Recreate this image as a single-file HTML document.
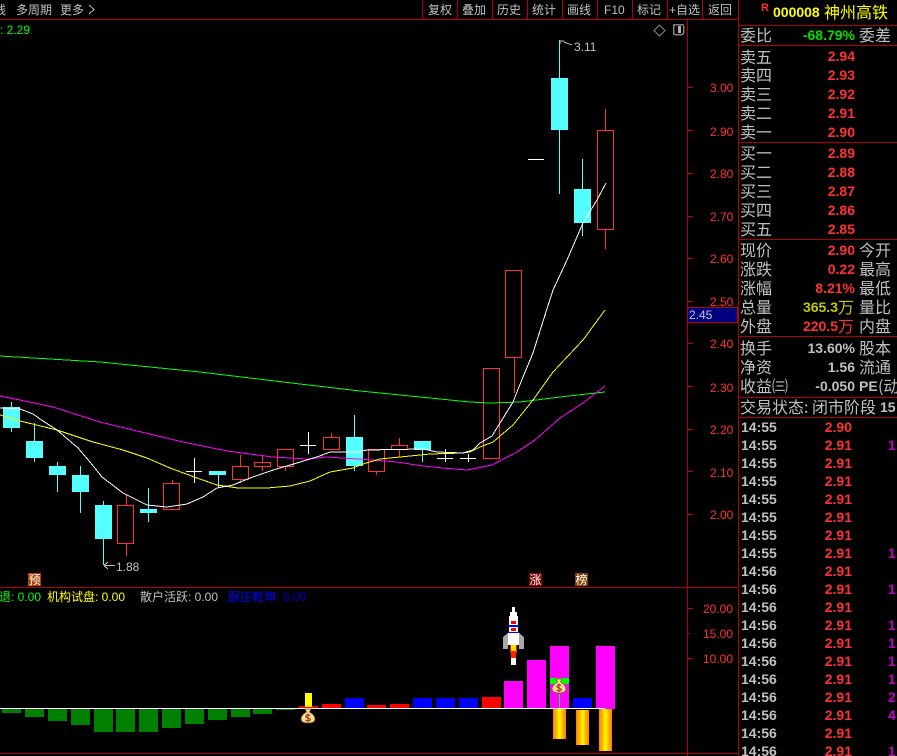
<!DOCTYPE html>
<html>
<head>
<meta charset="utf-8">
<style>
html,body{margin:0;padding:0;background:#000;width:897px;height:756px;overflow:hidden}
svg{display:block;position:absolute;left:0;top:0}
text{font-family:"Liberation Sans","WenQuanYi Zen Hei","Noto Sans CJK SC",sans-serif;white-space:pre}
.c12{font-size:12px;font-family:"WenQuanYi Zen Hei","Noto Sans CJK SC",sans-serif;fill:#c0c0c0}
.c16{font-size:16px;font-family:"WenQuanYi Zen Hei","Noto Sans CJK SC",sans-serif;fill:#c0c0c0}
.n{font-size:14px;font-weight:bold;fill:#ff3232;text-anchor:end}
.g{font-size:14px;font-weight:bold;fill:#c0c0c0}
.a{font-size:12px;fill:#ff3232}
.p{font-size:14px;font-weight:bold;fill:#c000c0}
</style>
</head>
<body>
<svg width="897" height="756" viewBox="0 0 897 756" xmlns="http://www.w3.org/2000/svg" shape-rendering="crispEdges">
<defs>
<linearGradient id="o" x1="0" x2="1" y1="0" y2="0">
<stop offset="0" stop-color="#ff8000"/><stop offset=".25" stop-color="#ffb000"/><stop offset=".5" stop-color="#ffff00"/><stop offset=".75" stop-color="#ffb000"/><stop offset="1" stop-color="#ff8000"/>
</linearGradient>
<g id="bag" shape-rendering="auto">
<path d="M-3-7H3L1.500-4C5-2 7 0 7 3C7 6 4 7 0 7C-4 7-7 6-7 3C-7 0-5-2-1.500-4Z" fill="#f8dc88" stroke="#7a4a20" stroke-width=".7"/>
<path d="M2.200-.5C1-1.500-2-1.500-2.200.3C-2.200 2.500 2.400 1.500 2.400 3.600C2.200 5.300-1 5.300-2.500 4M0-2.500V6" fill="none" stroke="#9a3030" stroke-width="1.100"/>
</g>
</defs>

<!-- frame lines -->
<path d="M0 19.500H738M422.500 0V19M457.500 0V19M492.500 0V19M527.500 0V19M562.500 0V19M597.500 0V19M632.500 0V19M667.500 0V19M702.500 0V19M738.500 0V756M687.500 19V756M0 587.500H738M0 753.500H738M738 25.500H897M738 45.500H897M738 142.500H897M738 239.500H897M738 336.500H897M738 397.500H897M738 417.500H897" stroke="#b00000" fill="none"/>

<!-- toolbar -->
<text class="c12" x="-6" y="14">线</text>
<text class="c12" x="16" y="14">多周期</text>
<text class="c12" x="60" y="14">更多</text>
<path d="M89 5L94 9.500L89 14" fill="none" stroke="#c0c0c0"/>
<text class="c12" x="428" y="14">复权</text>
<text class="c12" x="462" y="14">叠加</text>
<text class="c12" x="497" y="14">历史</text>
<text class="c12" x="532" y="14">统计</text>
<text class="c12" x="567" y="14">画线</text>
<text x="604" y="14" style="font-size:12px;fill:#c0c0c0">F10</text>
<text class="c12" x="637" y="14">标记</text>
<text x="669" y="14" style="font-size:12px;fill:#c0c0c0">+</text>
<text class="c12" x="676" y="14">自选</text>
<text class="c12" x="708" y="14">返回</text>

<!-- top icons -->
<text x="0" y="34" style="font-size:12px;fill:#00ff00">: 2.29</text>
<path d="M659.500 25L665 30.500L659.500 36L654 30.500Z" fill="none" stroke="#808080"/>
<rect x="673.500" y="24.500" width="10" height="10" rx="1.500" fill="#000" stroke="#808080" stroke-width="1.500"/>
<rect x="678" y="26" width="3" height="7" fill="#b0b0b0"/>

<!-- axis -->
<path d="M687 87.500H693M687 130.500H693M687 173.500H693M687 216.500H693M687 258.500H693M687 301.500H693M687 343.500H693M687 386.500H693M687 429.500H693M687 471.500H693M687 514.500H693M687 608.500H693M687 633.500H690M687 658.500H693" stroke="#c00000"/>
<text class="a" x="710" y="92">3.00</text>
<text class="a" x="710" y="136">2.90</text>
<text class="a" x="710" y="178">2.80</text>
<text class="a" x="710" y="221">2.70</text>
<text class="a" x="710" y="263">2.60</text>
<text class="a" x="710" y="306">2.50</text>
<text class="a" x="710" y="348">2.40</text>
<text class="a" x="710" y="392">2.30</text>
<text class="a" x="710" y="434">2.20</text>
<text class="a" x="710" y="477">2.10</text>
<text class="a" x="710" y="519">2.00</text>
<rect x="687.500" y="307.500" width="50" height="15" fill="#000080" stroke="#c00000"/>
<text x="689" y="319" style="font-size:12px;fill:#c8c8c8">2.45</text>
<text class="a" x="703" y="613">20.00</text>
<text class="a" x="703" y="638">15.00</text>
<text class="a" x="703" y="663">10.00</text>

<!-- candle wicks -->
<path d="M11.500 402V432M34.500 423V462M57.500 462V492M80.500 466V513M103.500 501V565M148.500 488V522M218.500 475V488M354.500 415V471M422.500 449V462M559.500 40V194M582.500 159V236" stroke="#54ffff" fill="none"/>
<path d="M126.500 494V505M126.500 544V556M172.500 480V483M240.500 455V466M240.500 480V483M262.500 455V462M262.500 467V471M285.500 467V471M331.500 433V437M376.500 472V475M399.500 438V445M399.500 449V457M514.500 357V393M605.500 109V130M605.500 229V249" stroke="#ff3232" fill="none"/>
<!-- cyan bodies -->
<g fill="#54ffff">
<rect x="3" y="407" width="17" height="21"/>
<rect x="26" y="441" width="17" height="17"/>
<rect x="49" y="466" width="17" height="9"/>
<rect x="72" y="475" width="17" height="17"/>
<rect x="95" y="505" width="17" height="34"/>
<rect x="140" y="509" width="17" height="4"/>
<rect x="209" y="471" width="17" height="4"/>
<rect x="346" y="437" width="17" height="29"/>
<rect x="414" y="441" width="17" height="9"/>
<rect x="551" y="78" width="17" height="52"/>
<rect x="574" y="189" width="17" height="34"/>
</g>
<!-- red bodies -->
<g fill="none" stroke="#ff3232">
<rect x="117.500" y="505.500" width="16" height="38"/>
<rect x="163.500" y="483.500" width="16" height="26"/>
<rect x="232.500" y="466.500" width="16" height="13"/>
<rect x="254.500" y="462.500" width="16" height="4"/>
<rect x="277.500" y="449.500" width="16" height="17"/>
<rect x="323.500" y="437.500" width="16" height="12"/>
<rect x="368.500" y="449.500" width="16" height="22"/>
<rect x="391.500" y="445.500" width="16" height="4"/>
<rect x="483.500" y="368.500" width="16" height="90"/>
<rect x="505.500" y="270.500" width="16" height="87"/>
<rect x="597.500" y="130.500" width="16" height="99"/>
</g>
<!-- white crosses -->
<path d="M186 471.500H202M194.500 458V483M300 445.500H316M308.500 432V454M437 458.500H453M445.500 449V462M460 458.500H476M468.500 454V462M528 159.500H544" stroke="#fff" fill="none"/>

<!-- moving averages -->
<polyline fill="none" stroke="#00ff00" points="0,356 100,362 200,372 300,384 360,391 420,397 470,402 490,403 520,402 560,397 605,392"/>
<polyline fill="none" stroke="#ff00ff" points="0,396 20,400 53,407 100,422 133,430 183,442 227,451 250,454 273,457 307,459 327,457 357,459 373,460 397,462 423,466 443,468 467,470 492,465 517,452 535,440 560,418 583,403 605,386"/>
<polyline fill="none" stroke="#ffff00" points="0,415 20,421 57,430 93,442 123,450 147,458 170,468 197,478 217,485 238,488 267,488 290,486 310,481 330,472 353,468 363,464 380,459 410,456 430,454 463,453 470,452 480,447 493,442 513,425 533,400 553,372 583,340 605,310"/>
<polyline fill="none" stroke="#ffffff" points="0,408 20,409 33,414 43,421 57,430 78,448 90,462 102,477 123,493 147,505 167,507 187,504 203,497 217,488 233,485 250,478 273,470 297,463 317,457 330,452 357,452 367,450 423,449 437,452 463,453 473,450 480,443 492,436 500,423 513,402 523,377 533,353 545,315 553,290 560,275 567,260 583,223 597,200 606,183"/>

<!-- hi/lo labels -->
<path d="M560 41V44M560 41H564M564 42L572 45" stroke="#c0c0c0" fill="none"/>
<text x="574" y="51" style="font-size:12px;fill:#c0c0c0">3.11</text>
<path d="M104 565.500H115M104 565.500L108 562M104 565.500L108 569" stroke="#c0c0c0" fill="none"/>
<text x="116" y="571" style="font-size:12px;fill:#c0c0c0">1.88</text>

<!-- tags -->
<rect x="28" y="573" width="13" height="13" fill="#b04000"/>
<text x="28.500" y="584" style="font-size:12px;fill:#fff;font-family:'WenQuanYi Zen Hei','Noto Sans CJK SC',sans-serif">预</text>
<rect x="529" y="573" width="13" height="13" fill="#800000"/>
<text x="529.500" y="584" style="font-size:12px;fill:#fff;font-family:'WenQuanYi Zen Hei','Noto Sans CJK SC',sans-serif">涨</text>
<rect x="575" y="573" width="13" height="13" fill="#804000"/>
<text x="575.500" y="584" style="font-size:12px;fill:#fff;font-family:'WenQuanYi Zen Hei','Noto Sans CJK SC',sans-serif">榜</text>

<!-- legend -->
<text x="-1" y="601" style="font-size:12px;fill:#00ff00;font-family:'WenQuanYi Zen Hei','Noto Sans CJK SC',sans-serif">退</text>
<text x="11" y="601" style="font-size:12px;fill:#00ff00">: 0.00</text>
<text x="47" y="601" style="font-size:12px;fill:#ffff00;font-family:'WenQuanYi Zen Hei','Noto Sans CJK SC',sans-serif">机构试盘</text>
<text x="95" y="601" style="font-size:12px;fill:#ffff00">: 0.00</text>
<text x="140" y="601" style="font-size:12px;fill:#c0c0c0;font-family:'WenQuanYi Zen Hei','Noto Sans CJK SC',sans-serif">散户活跃</text>
<text x="188" y="601" style="font-size:12px;fill:#c0c0c0">: 0.00</text>
<text x="228" y="601" style="font-size:12px;fill:#0000ff;font-family:'WenQuanYi Zen Hei','Noto Sans CJK SC',sans-serif">跟庄乾坤</text>
<text x="276" y="601" style="font-size:12px;fill:#0000c8">: 0.00</text>

<!-- lower bars -->
<g fill="#008000">
<rect x="2" y="709" width="19" height="4"/>
<rect x="25" y="709" width="19" height="8"/>
<rect x="48" y="709" width="19" height="12"/>
<rect x="71" y="709" width="19" height="16"/>
<rect x="94" y="709" width="19" height="23"/>
<rect x="116" y="709" width="19" height="23"/>
<rect x="139" y="709" width="19" height="23"/>
<rect x="162" y="709" width="19" height="19"/>
<rect x="185" y="709" width="19" height="15"/>
<rect x="208" y="709" width="19" height="11"/>
<rect x="231" y="709" width="19" height="8"/>
<rect x="253" y="709" width="19" height="5"/>
<rect x="276" y="709" width="19" height="1"/>
</g>
<g fill="#ff0000">
<rect x="299" y="706" width="19" height="3"/>
<rect x="322" y="704" width="19" height="5"/>
<rect x="367" y="705" width="19" height="4"/>
<rect x="390" y="704" width="19" height="5"/>
<rect x="482" y="697" width="19" height="12"/>
</g>
<rect x="305" y="693" width="7" height="14" fill="#ffff00"/>
<g fill="#0000ff">
<rect x="345" y="698" width="19" height="11"/>
<rect x="413" y="698" width="19" height="11"/>
<rect x="436" y="698" width="19" height="11"/>
<rect x="459" y="698" width="19" height="11"/>
<rect x="573" y="698" width="19" height="11"/>
</g>
<g fill="#ff00ff">
<rect x="504" y="681" width="19" height="28"/>
<rect x="527" y="660" width="19" height="49"/>
<rect x="550" y="646" width="19" height="63"/>
<rect x="596" y="646" width="19" height="63"/>
</g>
<rect x="553" y="709" width="13" height="30" fill="url(#o)"/>
<rect x="576" y="710" width="13" height="35" fill="url(#o)"/>
<rect x="599" y="709" width="13" height="42" fill="url(#o)"/>
<rect x="550" y="678" width="19" height="6" fill="#00ff00"/>
<rect x="559" y="694" width="1" height="14" fill="#00ff00"/>
<path d="M0 708.500H605" stroke="#fff"/>
<use href="#bag" x="559" y="686"/>
<use href="#bag" x="308" y="716"/>

<!-- rocket -->
<g>
<rect x="512" y="607" width="3" height="5" fill="#fff"/>
<rect x="510" y="612" width="7" height="4" fill="#fff"/>
<rect x="509" y="616" width="9" height="29" fill="#fff"/>
<path d="M503 649V637L508 633H519L524 637V649H519V645H508V649Z" fill="#a8a8a8"/>
<rect x="508" y="633" width="11" height="12" fill="#fff"/>
<rect x="511" y="621" width="5" height="3" fill="#ff0000"/>
<rect x="511" y="628" width="5" height="3" fill="#ff0000"/>
<rect x="508" y="625" width="11" height="2" fill="#0000ff"/>
<rect x="508" y="632" width="11" height="1" fill="#0000ff"/>
<rect x="510" y="645" width="7" height="8" fill="#ff2000"/>
<rect x="511" y="645" width="5" height="6" fill="#ffe000"/>
<rect x="511" y="653" width="5" height="5" fill="#ff2000"/>
<rect x="511" y="658" width="5" height="7" fill="#fff"/>
</g>

<!-- right panel header -->
<text x="761" y="11" style="font-size:11px;font-weight:bold;fill:#ff3232">R</text>
<text x="773" y="17" style="font-size:14px;font-weight:bold;fill:#ffff00">000008</text>
<text x="824" y="18" style="font-size:16px;fill:#ffff00;font-family:'WenQuanYi Zen Hei','Noto Sans CJK SC',sans-serif">神州高铁</text>

<text class="c16" x="740" y="41">委比</text>
<text class="n" x="855" y="40" style="fill:#00e000">-68.79%</text>
<text class="c16" x="859" y="41">委差</text>

<text class="c16" x="740" y="63">卖五</text><text class="n" x="855" y="61">2.94</text>
<text class="c16" x="740" y="81">卖四</text><text class="n" x="855" y="80">2.93</text>
<text class="c16" x="740" y="100">卖三</text><text class="n" x="855" y="99">2.92</text>
<text class="c16" x="740" y="119">卖二</text><text class="n" x="855" y="118">2.91</text>
<text class="c16" x="740" y="138">卖一</text><text class="n" x="855" y="137">2.90</text>
<text class="c16" x="740" y="159">买一</text><text class="n" x="855" y="158">2.89</text>
<text class="c16" x="740" y="178">买二</text><text class="n" x="855" y="177">2.88</text>
<text class="c16" x="740" y="197">买三</text><text class="n" x="855" y="196">2.87</text>
<text class="c16" x="740" y="216">买四</text><text class="n" x="855" y="215">2.86</text>
<text class="c16" x="740" y="235">买五</text><text class="n" x="855" y="234">2.85</text>

<text class="c16" x="740" y="256">现价</text><text class="n" x="855" y="255">2.90</text><text class="c16" x="859" y="256">今开</text>
<text class="c16" x="740" y="275">涨跌</text><text class="n" x="855" y="274">0.22</text><text class="c16" x="859" y="275">最高</text>
<text class="c16" x="740" y="294">涨幅</text><text class="n" x="855" y="293">8.21%</text><text class="c16" x="859" y="294">最低</text>
<text class="c16" x="740" y="313">总量</text><text class="n" x="838" y="312" style="fill:#c8c800">365.3</text><text class="c16" x="838" y="313" style="fill:#c8c800">万</text><text class="c16" x="859" y="313">量比</text>
<text class="c16" x="740" y="332">外盘</text><text class="n" x="838" y="331">220.5</text><text class="c16" x="838" y="332" style="fill:#ff3232">万</text><text class="c16" x="859" y="332">内盘</text>

<text class="c16" x="740" y="354">换手</text><text class="n" x="855" y="353" style="fill:#c0c0c0">13.60%</text><text class="c16" x="859" y="354">股本</text>
<text class="c16" x="740" y="373">净资</text><text class="n" x="855" y="372" style="fill:#c0c0c0">1.56</text><text class="c16" x="859" y="373">流通</text>
<text class="c16" x="740" y="392">收益㈢</text><text class="n" x="855" y="391" style="fill:#c0c0c0">-0.050</text><text x="859" y="391" style="font-size:14px;font-weight:bold;fill:#c0c0c0">PE</text><text class="c16" x="878" y="392">(动</text>

<text class="c16" x="740" y="413">交易状态:</text><text class="c16" x="812" y="413">闭市阶段</text><text class="g" x="880" y="412">15</text>

<!-- ticks -->
<g class="ticks">
<text class="g" x="741" y="432">14:55</text><text class="n" x="852" y="432">2.90</text>
<text class="g" x="741" y="450">14:55</text><text class="n" x="852" y="450">2.91</text><text class="p" x="888" y="450">1</text>
<text class="g" x="741" y="468">14:55</text><text class="n" x="852" y="468">2.91</text>
<text class="g" x="741" y="486">14:55</text><text class="n" x="852" y="486">2.91</text>
<text class="g" x="741" y="504">14:55</text><text class="n" x="852" y="504">2.91</text>
<text class="g" x="741" y="522">14:55</text><text class="n" x="852" y="522">2.91</text>
<text class="g" x="741" y="540">14:55</text><text class="n" x="852" y="540">2.91</text>
<text class="g" x="741" y="558">14:55</text><text class="n" x="852" y="558">2.91</text><text class="p" x="888" y="558">1</text>
<text class="g" x="741" y="576">14:56</text><text class="n" x="852" y="576">2.91</text>
<text class="g" x="741" y="594">14:56</text><text class="n" x="852" y="594">2.91</text><text class="p" x="888" y="594">1</text>
<text class="g" x="741" y="612">14:56</text><text class="n" x="852" y="612">2.91</text>
<text class="g" x="741" y="630">14:56</text><text class="n" x="852" y="630">2.91</text><text class="p" x="888" y="630">1</text>
<text class="g" x="741" y="648">14:56</text><text class="n" x="852" y="648">2.91</text><text class="p" x="888" y="648">1</text>
<text class="g" x="741" y="666">14:56</text><text class="n" x="852" y="666">2.91</text><text class="p" x="888" y="666">1</text>
<text class="g" x="741" y="684">14:56</text><text class="n" x="852" y="684">2.91</text><text class="p" x="888" y="684">1</text>
<text class="g" x="741" y="702">14:56</text><text class="n" x="852" y="702">2.91</text><text class="p" x="888" y="702">2</text>
<text class="g" x="741" y="720">14:56</text><text class="n" x="852" y="720">2.91</text><text class="p" x="888" y="720">4</text>
<text class="g" x="741" y="738">14:56</text><text class="n" x="852" y="738">2.91</text>
<text class="g" x="741" y="756">14:56</text><text class="n" x="852" y="756">2.91</text><text class="p" x="888" y="756">1</text>
</g>
</svg>
</body>
</html>
